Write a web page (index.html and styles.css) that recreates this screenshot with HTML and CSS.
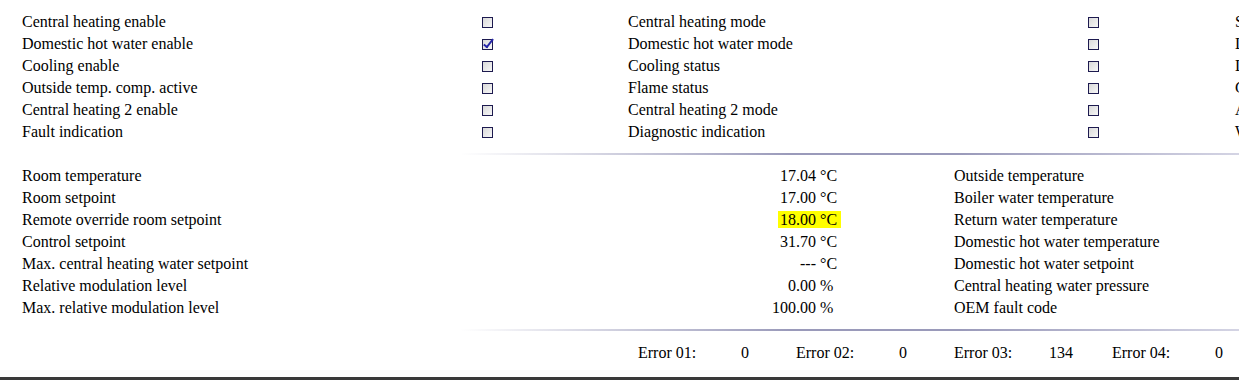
FILE: index.html
```html
<!DOCTYPE html>
<html>
<head>
    <title>OpenTherm Monitor</title>
    <link rel="stylesheet" href="styles.css">
</head>
<body>
    <div class="content">
        <div class="flags">
            <span class="name">Central heating enable</span><span class="box"><input type="checkbox" disabled></span>
            <span class="name">Central heating mode</span><span class="box"><input type="checkbox" disabled></span>
            <span class="name">Service request</span>

            <span class="name">Domestic hot water enable</span><span class="box"><input type="checkbox" checked disabled></span>
            <span class="name">Domestic hot water mode</span><span class="box"><input type="checkbox" disabled></span>
            <span class="name">Lockout-reset</span>

            <span class="name">Cooling enable</span><span class="box"><input type="checkbox" disabled></span>
            <span class="name">Cooling status</span><span class="box"><input type="checkbox" disabled></span>
            <span class="name">Low water press</span>

            <span class="name">Outside temp. comp. active</span><span class="box"><input type="checkbox" disabled></span>
            <span class="name">Flame status</span><span class="box"><input type="checkbox" disabled></span>
            <span class="name">Gas/flame fault</span>

            <span class="name">Central heating 2 enable</span><span class="box"><input type="checkbox" disabled></span>
            <span class="name">Central heating 2 mode</span><span class="box"><input type="checkbox" disabled></span>
            <span class="name">Air press fault</span>

            <span class="name">Fault indication</span><span class="box"><input type="checkbox" disabled></span>
            <span class="name">Diagnostic indication</span><span class="box"><input type="checkbox" disabled></span>
            <span class="name">Water over-temp</span>
        </div>

        <div class="rule"></div>

        <div class="readings">
            <span class="name">Room temperature</span><span class="num">17.04</span><span class="unit">°C</span>
            <span class="name">Outside temperature</span>

            <span class="name">Room setpoint</span><span class="num">17.00</span><span class="unit">°C</span>
            <span class="name">Boiler water temperature</span>

            <span class="name">Remote override room setpoint</span><span class="num"><mark class="hl">18.00</mark></span><span class="unit"><mark class="hl hl-unit">°C</mark></span>
            <span class="name">Return water temperature</span>

            <span class="name">Control setpoint</span><span class="num">31.70</span><span class="unit">°C</span>
            <span class="name">Domestic hot water temperature</span>

            <span class="name">Max. central heating water setpoint</span><span class="num">---</span><span class="unit">°C</span>
            <span class="name">Domestic hot water setpoint</span>

            <span class="name">Relative modulation level</span><span class="num">0.00</span><span class="unit">%</span>
            <span class="name">Central heating water pressure</span>

            <span class="name">Max. relative modulation level</span><span class="num">100.00</span><span class="unit">%</span>
            <span class="name">OEM fault code</span>
        </div>

        <div class="rule rule-low"></div>

        <div class="errors">
            <div class="err"><span class="err-label">Error 01:</span><span class="err-value">0</span></div>
            <div class="err"><span class="err-label">Error 02:</span><span class="err-value">0</span></div>
            <div class="err"><span class="err-label">Error 03:</span><span class="err-value">134</span></div>
            <div class="err"><span class="err-label">Error 04:</span><span class="err-value">0</span></div>
        </div>
    </div>
    <div class="footer"></div>
</body>
</html>
```

FILE: styles.css
```css
body { margin: 0; font-family: "Liberation Serif", "Times New Roman", serif; font-size: 16px; color: #000; background: #fff; }
.content { padding: 11px 0 0 22px; overflow: hidden; }

.flags { display: grid; grid-template-columns: 460px 146px 460px 147px 460px; grid-auto-rows: 22px; }
.name { line-height: 22px; white-space: nowrap; }
.box { display: flex; align-items: center; }

input[type="checkbox"] { appearance: none; -webkit-appearance: none; position: relative; width: 11px; height: 11px; margin: 0; border: 1px solid #1d1a4f; background: linear-gradient(135deg, #d9d9d9, #f7f7f7); box-sizing: border-box; }
input[type="checkbox"]:checked::before { content: ""; position: absolute; left: 3px; top: -3px; width: 3px; height: 9px; border-right: 2px solid #2525a8; border-bottom: 2px solid #2525a8; transform: rotate(38deg); }

.rule { height: 2px; margin: 10px 0 10px; background: linear-gradient(to right, rgba(150, 150, 185, 0) 36%, #9a9aba 63%, #9a9aba 77%, rgba(160, 160, 195, 0.45) 100%); }
.rule-low { margin: 10px 0 11px; }

.readings { display: grid; grid-template-columns: 678px 116px 138px 300px; grid-auto-rows: 22px; }
.num { line-height: 22px; text-align: right; white-space: nowrap; }
.unit { line-height: 22px; padding-left: 4px; white-space: nowrap; }
.hl { background: #ffff00; color: #000; padding-left: 2px; }
.hl-unit { margin-left: -4px; padding: 0 4px; }

.errors { display: flex; height: 22px; line-height: 22px; margin-left: 616px; }
.err { display: flex; flex-shrink: 0; width: 158px; }
.err-label { width: 84px; }
.err-value { width: 46px; text-align: center; }

.footer { margin-top: 13px; height: 40px; background: #3a3a3a; }
```
